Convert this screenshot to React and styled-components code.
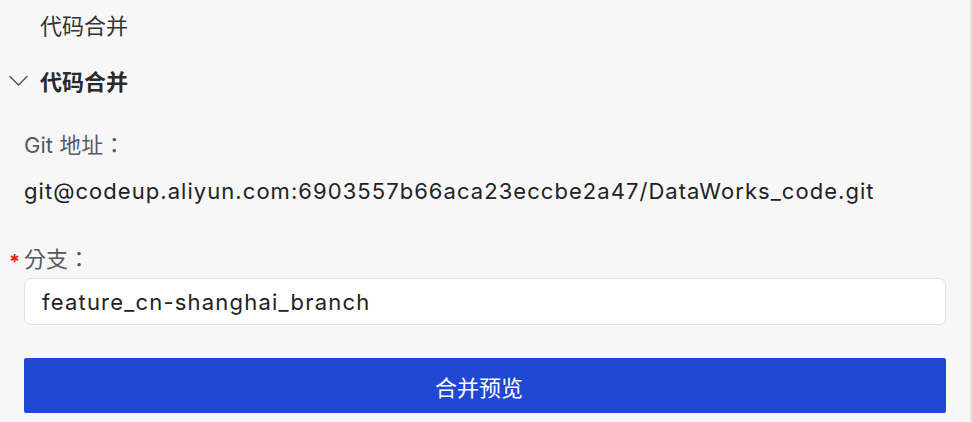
import React from "react";
import styled, { createGlobalStyle } from "styled-components";

const Global = createGlobalStyle`
  html, body { margin: 0; padding: 0; background: #f7f7f7; }
  body { font-family: Inter, "Noto Sans CJK SC", sans-serif; }
`;

const Page = styled.div`
  width: 972px;
  height: 422px;
  box-sizing: border-box;
  background: #f7f7f7;
  border-right: 2px solid #e4e4e4;
  display: flex;
  flex-direction: column;
  overflow: hidden;
  & > * { flex-shrink: 0; }
`;

const Crumb = styled.div`
  height: 48px;
  display: flex;
  align-items: center;
  padding-left: 40px;
  font-size: 22px;
  color: #333;
`;

const SectionHeader = styled.div`
  height: 64px;
  display: flex;
  align-items: center;
  gap: 12px;
  padding-left: 9px;
  font-size: 22px;
  font-weight: 700;
  color: #2a2a2a;
`;

const Body = styled.div`
  padding: 0 24px;
  display: flex;
  flex-direction: column;
  & > * { flex-shrink: 0; }
`;

const Label = styled.div`
  height: ${(p) => p.$h}px;
  margin-top: ${(p) => p.$mt || 0}px;
  display: flex;
  align-items: center;
  font-family: Inter, "Noto Sans CJK TC", sans-serif;
  font-size: 22px;
  color: #555a60;
  position: relative;
`;

const Required = styled.span`
  position: absolute;
  left: -15px;
  top: 50%;
  transform: translateY(-30%);
  color: #e2231a;
  font-size: 20px;
  font-weight: 700;
`;

const Value = styled.div`
  height: 34px;
  display: flex;
  align-items: center;
  font-size: 22px;
  letter-spacing: 1.05px;
  color: #222;
`;

const Input = styled.div`
  height: 47px;
  box-sizing: border-box;
  border: 1.5px solid #e2e2e2;
  border-radius: 7px;
  background: #fff;
  display: flex;
  align-items: center;
  padding-left: 17px;
  font-size: 22px;
  letter-spacing: 1.2px;
  color: #222;
`;

const Button = styled.button`
  margin-top: 33px;
  height: 55px;
  border: none;
  border-radius: 2px;
  background: #2148d3;
  color: #fff;
  font-family: "Noto Sans CJK SC", sans-serif;
  font-size: 22px;
  display: flex;
  align-items: center;
  justify-content: center;
  padding: 0 12px 0 0;
`;

const Chevron = () => (
  <svg width="19" height="11" viewBox="0 0 19 11" fill="none">
    <path d="M1 1.5 L9.5 10 L18 1.5" stroke="#555" strokeWidth="1.5" strokeLinecap="round" strokeLinejoin="round" />
  </svg>
);

export default function App() {
  return (
    <>
      <Global />
      <Page>
        <Crumb>代码合并</Crumb>
        <SectionHeader>
          <Chevron />
          代码合并
        </SectionHeader>
        <Body>
          <Label $h={62}>Git 地址：</Label>
          <Value>git@codeup.aliyun.com:6903557b66aca23eccbe2a47/DataWorks_code.git</Value>
          <Label $h={42} $mt={28}>
            <Required>*</Required>分支：
          </Label>
          <Input>feature_cn-shanghai_branch</Input>
          <Button>合并预览</Button>
        </Body>
      </Page>
    </>
  );
}
